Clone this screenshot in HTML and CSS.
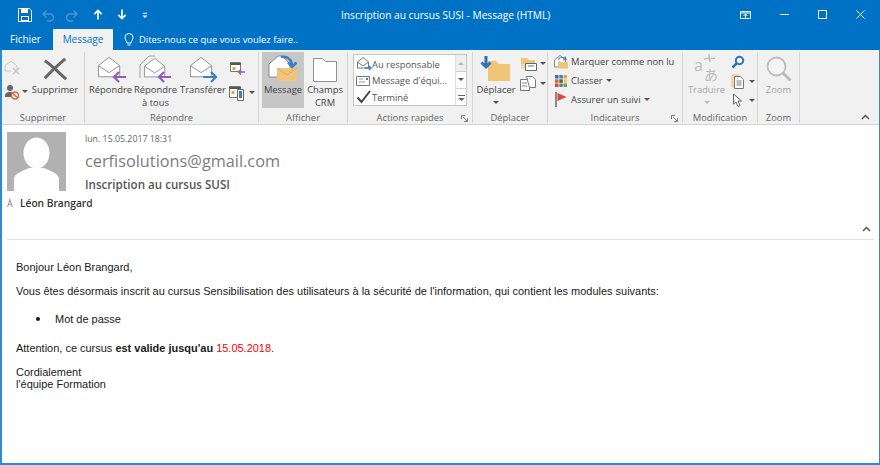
FILE: index.html
```html
<!DOCTYPE html>
<html lang="fr">
<head>
<meta charset="utf-8">
<title>Inscription au cursus SUSI - Message (HTML)</title>
<link rel="stylesheet" href="styles.css">
</head>
<body>
<svg class="defs" width="0" height="0">
  <symbol id="env" viewBox="0 0 28 26"><path d="M1.5 10.5 13 1.5l11.500 9v12h-23z" fill="#fff" stroke="#8a8a8a"/><path d="M1.500 10.500 13 18l11.500-7.500" fill="none" stroke="#8a8a8a"/></symbol>
  <symbol id="caret" viewBox="0 0 6 4"><path d="M0 0h6L3 3z" fill="#555"/></symbol>
</svg>
<div class="window">
  <header class="titlebar">
    <div class="qat">
      <svg class="q-save" width="14" height="14" viewBox="0 0 14 14"><path d="M.5.5h11l2 2v11H.5z" fill="none" stroke="#fff"/><path d="M3 1h7v4H3zM3 8h8v5H3z" fill="#fff"/><path d="M4 9h6v3H4z" fill="#0072c6"/></svg>
      <svg class="q-undo" width="14" height="14" viewBox="0 0 14 14"><path d="M3 6h6a3.500 3.500 0 0 1 0 7H6M5.500 2.500 2 6l3.500 3.500" fill="none" stroke="#4a93d0" stroke-width="1.500"/></svg>
      <svg class="q-redo" width="14" height="14" viewBox="0 0 14 14"><path d="M11 6H5a3.500 3.500 0 0 0 0 7h3M8.500 2.500 12 6 8.500 9.500" fill="none" stroke="#4a93d0" stroke-width="1.500"/></svg>
      <svg class="q-up" width="10" height="11" viewBox="0 0 12 13"><path d="M6 12.500V2M1.500 6 6 1.500 10.500 6" fill="none" stroke="#fff" stroke-width="2"/></svg>
      <svg class="q-down" width="10" height="11" viewBox="0 0 12 13"><path d="M6 .5V11M1.500 7 6 11.500 10.500 7" fill="none" stroke="#fff" stroke-width="2"/></svg>
      <svg class="q-more" width="6" height="6" viewBox="0 0 7 7"><path d="M1 1h5v1H1zM.5 4h6L3.500 7z" fill="#fff"/></svg>
    </div>
    <div class="title">Inscription au cursus SUSI - Message (HTML)</div>
    <div class="winctl">
      <svg width="11" height="8" viewBox="0 0 11 8"><path d="M.5.500h10v7H.5zM.5 2h10M5.500 7V3.500M3.500 5l2-2 2 2" fill="none" stroke="#fff"/></svg>
      <svg width="9" height="9" viewBox="0 0 9 9"><path d="M0 4.500h9" stroke="#fff"/></svg>
      <svg width="9" height="9" viewBox="0 0 9 9"><path d="M.5.500h8v8h-8z" fill="none" stroke="#fff"/></svg>
      <svg width="9" height="9" viewBox="0 0 9 9"><path d="m.5.500 8 8M8.500.500l-8 8" stroke="#fff"/></svg>
    </div>
  </header>
  <nav class="tabs">
    <span class="tab">Fichier</span>
    <span class="tab tab-active">Message</span>
    <svg class="bulb" width="10" height="14" viewBox="0 0 10 14"><path d="M3 10c0-2-2-3-2-5.500a4 4 0 0 1 8 0C9 7 7 8 7 10zM3.500 12h3" fill="none" stroke="#fff"/></svg>
    <span class="tell">Dites-nous ce que vous voulez faire..</span>
  </nav>
  <section class="ribbon">
    <div class="group g-del">
      <div class="gbody">
        <div class="smallcol sc-del">
          <svg width="16" height="16" viewBox="0 0 16 16"><path d="M1 6 7 1l6 5v3M1 6v5h6" fill="none" stroke="#c8c8c8"/><path d="m9 8 6 6m0-6-6 6" stroke="#c8c8c8" stroke-width="1.500"/></svg>
          <span class="withcaret"><svg width="16" height="16" viewBox="0 0 16 16"><circle cx="6" cy="4" r="3" fill="#666"/><path d="M1 12c0-3 2-4 5-4s4 1 4 2v3H1z" fill="#666"/><circle cx="11" cy="11.500" r="3.500" fill="#fff" stroke="#d9603a" stroke-width="1.500"/><path d="m9 9.500 4 4" stroke="#d9603a" stroke-width="1.500"/></svg><svg class="car" width="6" height="4"><use href="#caret"/></svg></span>
        </div>
        <div class="big b-supp">
          <svg class="ico" width="26" height="26" viewBox="0 0 28 28"><path d="M3 5c8 5 15 13 23 20M25 3C18 9 10 16 3 24" fill="none" stroke="#666" stroke-width="3.200"/></svg>
          <span>Supprimer</span>
        </div>
      </div>
      <div class="glabel">Supprimer</div>
    </div>
    <div class="group g-rep">
      <div class="gbody">
        <div class="big b-rep">
          <svg class="ico" width="36" height="28" viewBox="0 0 36 28"><use href="#env" x="4" y="1" width="26" height="24"/><path d="M33 22H21M26 17l-5 5 5 5" fill="none" stroke="#8e5fb8" stroke-width="2.200"/></svg>
          <span>Répondre</span>
        </div>
        <div class="big b-all">
          <svg class="ico" width="36" height="28" viewBox="0 0 36 28"><path d="M2 10 11 1h6M2 10v13" fill="none" stroke="#a0a0a0"/><use href="#env" x="5" y="2" width="25" height="23"/><path d="M33 22H21M26 17l-5 5 5 5" fill="none" stroke="#8e5fb8" stroke-width="2.200"/></svg>
          <span>Répondre<br>à tous</span>
        </div>
        <div class="big b-fwd">
          <svg class="ico" width="36" height="28" viewBox="0 0 36 28"><use href="#env" x="4" y="1" width="26" height="24"/><path d="M18 22h13M26 17l5 5-5 5" fill="none" stroke="#3f7fbf" stroke-width="2.200"/></svg>
          <span>Transférer</span>
        </div>
        <div class="smallcol sc-rep">
          <svg width="16" height="15" viewBox="0 0 16 15"><path d="M1.500 1.500h10v9h-10z" fill="#fff" stroke="#777"/><path d="M1.500 3h10" stroke="#555" stroke-width="2"/><path d="M3.500 6h3v3h-3z" fill="#e8a33c"/><path d="M16 11H9M12 8.500 9.500 11l2.500 2.500" fill="none" stroke="#8e5fb8" stroke-width="1.500"/></svg>
          <span class="withcaret"><svg width="17" height="16" viewBox="0 0 17 16"><path d="M.5 1.500h11v11H.5z" fill="#fff" stroke="#777"/><path d="M.5 3h11" stroke="#555" stroke-width="2"/><path d="M2.500 6h3v3h-3z" fill="#e8a33c"/><path d="M8.500 4.500h6v11h-6z" fill="#fff" stroke="#666"/><path d="M10 6h3v7h-3z" fill="#3f7fbf"/></svg><svg class="car" width="6" height="4"><use href="#caret"/></svg></span>
        </div>
      </div>
      <div class="glabel">Répondre</div>
    </div>
    <div class="group g-aff">
      <div class="gbody">
        <div class="big b-msg">
          <svg class="ico" width="32" height="28" viewBox="0 0 32 28"><path d="M2 9 11 1h4l8 8v13H2z" fill="#fff" stroke="#8a8a8a"/><path d="M10 13h20v13H10z" fill="#f0c57a"/><path d="m10 13 10 7 10-7" fill="none" stroke="#dca85c"/><path d="M14 2c7-1 11 3 11 9M21 7.500l4 4.500 4.500-4.500" fill="none" stroke="#3f7fbf" stroke-width="2.500"/></svg>
          <span>Message</span>
        </div>
        <div class="big b-crm">
          <svg class="ico" width="28" height="28" viewBox="0 0 28 28"><path d="M2.500 3.500h9l3 3h11v20h-23z" fill="#fff" stroke="#8f8f8f"/></svg>
          <span>Champs<br>CRM</span>
        </div>
      </div>
      <div class="glabel">Afficher</div>
    </div>
    <div class="group g-act">
      <div class="gbody">
        <div class="qsteps">
          <div class="qlist">
            <div class="qrow"><svg width="16" height="14" viewBox="0 0 16 14"><path d="M1.500 5 7 .5 12.500 5v6h-11z" fill="#fff" stroke="#777"/><path d="M1.500 5 7 9l5.500-4" fill="none" stroke="#777"/><path d="M9 11h6M13 9l2 2-2 2" fill="none" stroke="#3f7fbf" stroke-width="1.300"/></svg><span>Au responsable</span></div>
            <div class="qrow"><svg width="16" height="14" viewBox="0 0 16 14"><path d="M.5 2.500h13v9H.5z" fill="#fff" stroke="#777"/><path d="M3 5h4M3 8h6" stroke="#999"/><path d="M10 4h2v2h-2z" fill="#3f7fbf"/></svg><span>Message d'équi...</span></div>
            <div class="qrow"><svg width="16" height="14" viewBox="0 0 16 14"><path d="m1.500 7.500 4 4.500 8.500-11" fill="none" stroke="#444" stroke-width="2"/></svg><span>Terminé</span></div>
          </div>
          <div class="qscroll">
            <span class="qs qs-off"><svg width="6" height="4" viewBox="0 0 6 4"><path d="M0 4h6L3 1z" fill="#bbb"/></svg></span>
            <span class="qs"><svg class="car" width="6" height="4"><use href="#caret"/></svg></span>
            <span class="qs qs-last"><svg width="7" height="7" viewBox="0 0 7 7"><path d="M0 1h7v1H0zM0 4h7L3.500 7z" fill="#666"/></svg></span>
          </div>
        </div>
      </div>
      <div class="glabel">Actions rapides<svg class="launch" width="7" height="7" viewBox="0 0 7 7"><path d="M.5 4V.5H4M2 2l4 4M6.500 3v3.500H3" fill="none" stroke="#777"/></svg></div>
    </div>
    <div class="group g-dep">
      <div class="gbody">
        <div class="big b-dep">
          <svg class="ico" width="32" height="28" viewBox="0 0 32 28"><path d="M8 6h8l3 3h11v17H8z" fill="#f0c57a"/><path d="M6 1v10M1.500 7.500 6 12l4.500-4.500" fill="none" stroke="#2f74b5" stroke-width="3"/></svg>
          <span>Déplacer</span>
          <svg class="bigcar" width="6" height="4"><use href="#caret"/></svg>
        </div>
        <div class="smallcol sc-dep">
          <span class="withcaret"><svg width="17" height="15" viewBox="0 0 17 15"><path d="M1 2h6l2 2h6v4H1z" fill="#f0c57a"/><path d="M1 8h8v5H1z" fill="#f0c57a" opacity=".5"/><path d="M5.500 7.500h11v7h-11z" fill="#fff" stroke="#666"/><path d="M8 10h6" stroke="#3f7fbf"/></svg><svg class="car" width="6" height="4"><use href="#caret"/></svg></span>
          <span class="withcaret"><svg width="17" height="15" viewBox="0 0 17 15"><path d="M.5 3.500h9v11h-9z" fill="#fff" stroke="#777"/><path d="M6.500.5h6l3 3v8h-6z" fill="#fff" stroke="#777"/><path d="M2 7h5M2 10h5" stroke="#888"/></svg><svg class="car" width="6" height="4"><use href="#caret"/></svg></span>
        </div>
      </div>
      <div class="glabel">Déplacer</div>
    </div>
    <div class="group g-ind">
      <div class="gbody">
        <div class="indcol">
          <div class="irow"><svg width="16" height="15" viewBox="0 0 16 15"><path d="M1.500 6 7 1.500 12.500 6v7h-11z" fill="#fff" stroke="#888"/><path d="M5 8h10v6.500H5z" fill="#f0c57a"/><path d="M5 5.500c2-3 6-3 8 0M12 2.500l1 3-3 .5" fill="none" stroke="#3f7fbf" stroke-width="1.200"/></svg><span>Marquer comme non lu</span></div>
          <div class="irow"><svg width="16" height="14" viewBox="0 0 14 14"><path d="M1 1h3.500v3.500H1z" fill="#2f74b5"/><path d="M5.300 1h3.500v3.500H5.300z" fill="#3f7fbf"/><path d="M9.500 1H13v3.500H9.500z" fill="#e8a33c"/><path d="M1 5.300h3.500v3.500H1z" fill="#d9603a"/><path d="M5.300 5.300h3.500v3.500H5.300z" fill="#5a5a5a"/><path d="M9.500 5.300H13v3.500H9.500z" fill="#f0c57a"/><path d="M1 9.500h3.500V13H1z" fill="#c9503a"/><path d="M5.300 9.500h3.500V13H5.300z" fill="#7a7a7a"/><path d="M9.500 9.500H13V13H9.500z" fill="#5fa35f"/></svg><span>Classer</span><svg class="car" width="6" height="4"><use href="#caret"/></svg></div>
          <div class="irow"><svg width="16" height="15" viewBox="0 0 16 15"><path d="M3 0v15" stroke="#666" stroke-width="1.500"/><path d="M4.500 1l9 4-9 4z" fill="#d9483a"/></svg><span>Assurer un suivi</span><svg class="car" width="6" height="4"><use href="#caret"/></svg></div>
        </div>
      </div>
      <div class="glabel">Indicateurs<svg class="launch" width="7" height="7" viewBox="0 0 7 7"><path d="M.5 4V.5H4M2 2l4 4M6.500 3v3.500H3" fill="none" stroke="#777"/></svg></div>
    </div>
    <div class="group g-mod">
      <div class="gbody">
        <div class="big b-tra off">
          <svg class="ico" width="32" height="29" viewBox="0 0 32 29"><text class="glyph-a" x="3" y="17">a</text><text class="glyph-j" x="13" y="26">あ</text><path d="M13 5c4-2 6 1 11-1M18 0c0 3 0 5 1 8" fill="none" stroke="#bdbdbd" stroke-width="1.400"/></svg>
          <span>Traduire</span>
          <svg class="bigcar" width="6" height="4" viewBox="0 0 6 4"><path d="M0 0h6L3 3z" fill="#bbb"/></svg>
        </div>
        <div class="smallcol sc-mod">
          <svg class="nocaret" width="14" height="14" viewBox="0 0 14 14"><circle cx="8.500" cy="5.500" r="3.700" fill="none" stroke="#2f74b5" stroke-width="2"/><path d="M6 8 1.500 12.500" stroke="#2f74b5" stroke-width="2.500"/></svg>
          <span class="withcaret"><svg width="15" height="15" viewBox="0 0 15 15"><path d="M1 1h7v12H1z" fill="#f6dca8" stroke="#e8c488"/><path d="M3.500 2.500h6l3 3v9h-9z" fill="#fff" stroke="#777"/><path d="M5.500 7h5M5.500 9h5M5.500 11h5" stroke="#777"/></svg><svg class="car" width="6" height="4"><use href="#caret"/></svg></span>
          <span class="withcaret"><svg width="15" height="15" viewBox="0 0 15 15"><path d="M2.500 1v10l2.500-2 2 4.500 2-1-2-4.500h3.500z" fill="#fff" stroke="#666"/></svg><svg class="car" width="6" height="4"><use href="#caret"/></svg></span>
        </div>
      </div>
      <div class="glabel">Modification</div>
    </div>
    <div class="group g-zoom">
      <div class="gbody">
        <div class="big b-zoom off">
          <svg class="ico" width="26" height="26" viewBox="0 0 26 26"><circle cx="10.500" cy="10.500" r="9" fill="#f6f3f6" stroke="#bdbdbd" stroke-width="1.800"/><path d="m17 17 7.500 7.500" stroke="#bdbdbd" stroke-width="3"/></svg>
          <span>Zoom</span>
        </div>
      </div>
      <div class="glabel">Zoom</div>
    </div>
    <div class="ribbon-end"><svg width="9" height="6" viewBox="0 0 9 6"><path d="m1 5 3.500-3.500L8 5" fill="none" stroke="#555" stroke-width="1.500"/></svg></div>
  </section>
  <main class="reading">
    <div class="msghead">
      <div class="avatar"><svg width="59" height="59" viewBox="0 0 59 59"><rect width="59" height="59" fill="#b1b1b1"/><ellipse cx="29.500" cy="21" rx="13" ry="15.500" fill="#fff"/><path d="M7 59V47c0-5 8-8 15-11h15c7 3 15 6 15 11v12z" fill="#fff"/></svg></div>
      <div class="meta">
        <div class="date">lun. 15.05.2017 18:31</div>
        <div class="from">cerfisolutions@gmail.com</div>
        <div class="subject">Inscription au cursus SUSI</div>
      </div>
    </div>
    <div class="to"><span class="to-l">À</span><span class="to-n">Léon Brangard</span></div>
    <div class="fold"><svg width="9" height="6" viewBox="0 0 9 6"><path d="m1 5 3.500-3.500L8 5" fill="none" stroke="#555" stroke-width="1.500"/></svg></div>
    <article class="mail">
      <p>Bonjour Léon Brangard,</p>
      <p class="p-lead">Vous êtes désormais inscrit au cursus Sensibilisation des utilisateurs à la sécurité de l'information, qui contient les modules suivants:</p>
      <ul><li>Mot de passe</li></ul>
      <p>Attention, ce cursus <b>est valide jusqu'au</b> <span class="red">15.05.2018</span>.</p>
      <p>Cordialement<br>l'équipe Formation</p>
    </article>
  </main>
</div>
</body>
</html>
```
FILE: styles.css
```css
* { box-sizing: border-box; }
html, body { margin: 0; padding: 0; }
body { width: 880px; height: 465px; overflow: hidden; background: #fff; font-family: "Open Sans", "Noto Sans", sans-serif; }
.defs { display: block; height: 0; }
.window { width: 880px; height: 465px; display: flex; flex-direction: column; border: solid #2f8ad6; border-width: 0 1px 2px 2px; background: #fff; }

.titlebar { height: 29px; flex: none; background: #0072c6; display: flex; align-items: center; margin: 0 -1px 0 -2px; padding-left: 2px; padding-right: 1px; color: #fff; }
.qat { display: flex; align-items: center; padding-left: 16px; width: 339px; flex: none; }
.qat svg { flex: none; }
.q-undo { margin-left: 9px; }
.q-redo { margin-left: 10px; }
.q-up { margin-left: 14px; }
.q-down { margin-left: 14px; }
.q-more { margin-left: 15px; }
.title { font-size: 10.200px; white-space: nowrap; width: 195px; flex: none; text-align: center; }
.winctl { margin-left: auto; display: flex; align-items: center; gap: 29px; padding-right: 14px; }

.tabs { height: 21px; flex: none; background: #0072c6; display: flex; align-items: center; color: #fff; font-size: 10px; margin: 0 -1px 0 -2px; padding-left: 2px; }
.tab { padding: 0 0 0 8px; width: 51px; white-space: nowrap; line-height: 21px; }
.tab-active { width: 60px; background: #f1f1f1; color: #0072c6; text-align: center; padding: 0; }
.bulb { margin-left: 11px; flex: none; }
.tell { margin-left: 5px; white-space: nowrap; font-size: 9.400px; }

.ribbon { height: 75px; flex: none; background: #f1f1f1; border-bottom: 1px solid #d4d4d4; display: flex; font-size: 9.400px; color: #444; }
.group { flex: none; display: flex; flex-direction: column; border-right: 1px solid #d6d6d6; margin: 2px 0 1px; position: relative; }
.gbody { height: 60px; display: flex; align-items: flex-start; }
.glabel { height: 11px; line-height: 11px; text-align: center; color: #666; font-size: 9.400px; white-space: nowrap; }
.launch { position: absolute; right: 4px; bottom: 1px; }
.g-del { width: 83px; }
.g-rep { width: 174px; }
.g-aff { width: 89px; }
.g-act { width: 125px; }
.g-dep { width: 75px; }
.g-ind { width: 135px; }
.g-mod { width: 75px; }
.g-zoom { width: 42px; }
.ribbon-end { flex: 1; display: flex; justify-content: flex-end; align-items: flex-end; padding: 0 9px 4px 0; }

.big { display: flex; flex-direction: column; align-items: center; text-align: center; line-height: 13px; padding-top: 3px; white-space: nowrap; height: 56px; flex: none; }
.big .ico { height: 28px; flex: none; }
.bigcar { margin-top: 5px; }
.off { color: #a6a6a6; }
.smallcol { display: flex; flex-direction: column; flex: none; }
.withcaret { display: flex; align-items: center; gap: 3px; }
.car { flex: none; }

.sc-del { width: 30px; padding: 8px 0 0 2px; gap: 8px; }
.sc-del .withcaret { gap: 2px; }
.b-supp { width: 46px; }
.b-rep { width: 45px; margin-left: 3px; }
.b-all { width: 45px; }
.b-fwd { width: 46px; margin-left: 2px; }
.sc-rep { margin-left: 3px; padding-top: 9px; gap: 9px; }
.b-msg { width: 42px; margin-left: 3px; background: #c6c6c6; }
.b-crm { width: 40px; margin-left: 1px; }
.qsteps { display: flex; width: 114px; height: 52px; margin: 2px 0 0 5px; border: 1px solid #c6c6c6; background: #fff; color: #555; }
.qlist { flex: 1; padding-top: 1px; }
.qrow { display: flex; align-items: center; gap: 0; height: 16.500px; padding-left: 2px; white-space: nowrap; }
.qscroll { width: 11px; display: flex; flex-direction: column; border-left: 1px solid #e0e0e0; }
.qs { flex: 1; display: flex; align-items: center; justify-content: center; border-bottom: 1px solid #d0d0d0; background: #fff; }
.qs-off { background: #efefef; }
.qs-last { border-bottom: 0; }
.b-dep { width: 44px; margin-left: 1px; }
.sc-dep { padding: 4px 0 0 2px; gap: 5px; }
.indcol { padding: 0 0 0 5px; display: flex; flex-direction: column; }
.irow { height: 19px; display: flex; align-items: center; gap: 2px; white-space: nowrap; }
.irow .car { margin-left: 1px; }
.b-tra { width: 43px; margin-left: 2px; padding-top: 2px; }
.b-tra .ico { height: 29px; }
.glyph-a { font-family: "Open Sans", sans-serif; font-size: 16px; fill: #bdbdbd; }
.glyph-j { font-family: "Noto Sans CJK JP", sans-serif; font-size: 14px; fill: #bdbdbd; }
.sc-mod { padding: 3px 0 0 3px; gap: 4px; }
.nocaret { margin-bottom: 1px; }
.b-zoom { width: 41px; }

.reading { flex: 1; min-height: 0; padding: 7px 5px 0 5px; color: #333; }
.msghead { display: flex; height: 60px; }
.avatar { width: 59px; height: 59px; flex: none; }
.avatar svg { display: block; }
.meta { margin-left: 19px; padding-top: 1px; display: flex; flex-direction: column; }
.date { font-size: 8.800px; color: #666; line-height: 12px; }
.from { font-size: 16.300px; color: #7c7c7c; line-height: 22px; margin-top: 5px; }
.subject { font-size: 11.600px; line-height: 15px; color: #555; margin-top: 5px; font-weight: 600; }
.to { display: flex; height: 13px; line-height: 13px; margin-top: 5px; }
.to-l { width: 13px; color: #777; font-size: 9px; }
.to-n { font-size: 10.200px; font-weight: 600; color: #333; }
.fold { height: 27px; display: flex; justify-content: flex-end; align-items: flex-end; padding: 0 3px 7px 0; border-bottom: 1px solid #e1e1e1; margin-top: 3px; }
.mail { padding: 21px 0 0 9px; font-family: "Liberation Sans", Arial, sans-serif; font-size: 10.970px; line-height: 12px; color: #1a1a1a; }
.mail p { margin: 0 0 12px; }
.mail .p-lead { margin-bottom: 16px; }
.mail ul { margin: 0 0 17px; padding: 0 0 0 20px; list-style: none; }
.mail li { display: flex; align-items: center; gap: 15px; }
.mail li::before { content: ""; width: 4px; height: 4px; border-radius: 50%; background: #1a1a1a; flex: none; }
.red { color: #f00; }
```
